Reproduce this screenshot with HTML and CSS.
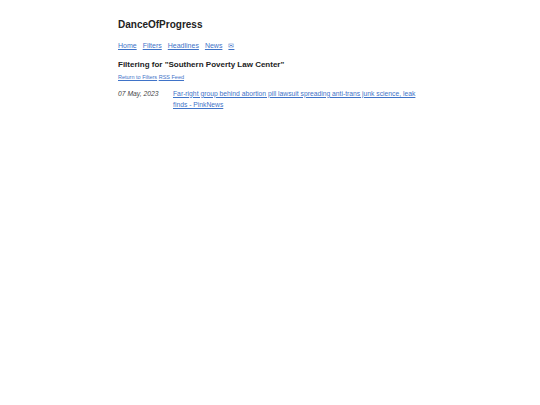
FILE: index.html
```html
<!DOCTYPE html>
<html>
<head>
<meta charset="utf-8">
<link rel="stylesheet" href="styles.css">
</head>
<body>
<div class="page">
  <h1 class="title">DanceOfProgress</h1>
  <nav class="nav">
    <a href="#">Home</a>
    <a href="#">Filters</a>
    <a href="#">Headlines</a>
    <a href="#">News</a>
    <a href="#">✉</a>
  </nav>
  <h2 class="heading">Filtering for "Southern Poverty Law Center"</h2>
  <div class="sublinks"><a href="#">Return to Filters</a> <a href="#">RSS Feed</a></div>
  <div class="item">
    <div class="date">07 May, 2023</div>
    <div class="headline"><a href="#">Far-right group behind abortion pill lawsuit spreading anti-trans junk science, leak finds - PinkNews</a></div>
  </div>
</div>
</body>
</html>
```

FILE: styles.css
```css
html, body {
  margin: 0;
  padding: 0;
  background: #fff;
}
body {
  font-family: "Liberation Sans", Arial, sans-serif;
  color: #222;
}
.page {
  width: 304px;
  margin: 0 auto;
  padding-top: 19px;
}
.title {
  font-size: 10px;
  font-weight: bold;
  margin: 0 0 9.5px 0;
  line-height: 12px;
}
.nav {
  font-size: 7px;
  line-height: 9px;
  display: flex;
  gap: 6px;
  margin-bottom: 10.5px;
}
a {
  color: #3f73c8;
}
.heading {
  font-size: 8px;
  font-weight: bold;
  margin: 0 0 3.5px 0;
  line-height: 10px;
}
.sublinks {
  font-size: 5.5px;
  line-height: 7px;
  margin-bottom: 7px;
}
.item {
  display: flex;
  font-size: 6.75px;
  line-height: 11px;
}
.date {
  width: 55px;
  flex: none;
  font-style: italic;
  color: #444;
}
.headline {
  flex: 1;
}
```
